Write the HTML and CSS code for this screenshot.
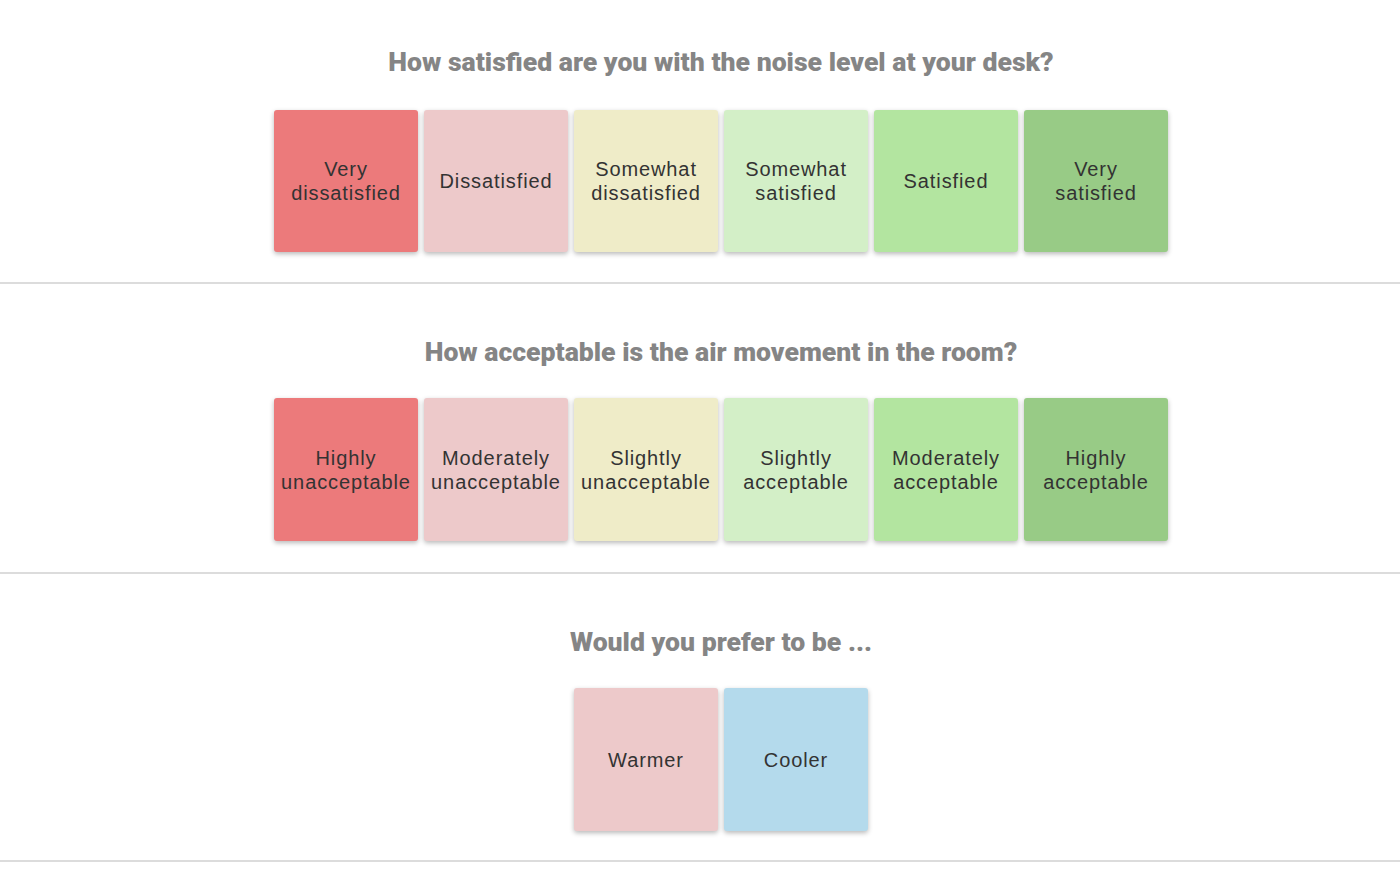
FILE: index.html
```html
<!DOCTYPE html>
<html>
<head>
<meta charset="utf-8">
<link rel="stylesheet" href="styles.css">
</head>
<body>
<main class="survey">
  <section class="question first">
    <h2 class="q-title">How satisfied are you with the noise level at your desk?</h2>
    <div class="options">
      <button class="opt c1">Very<br>dissatisfied</button>
      <button class="opt c2">Dissatisfied</button>
      <button class="opt c3">Somewhat<br>dissatisfied</button>
      <button class="opt c4">Somewhat<br>satisfied</button>
      <button class="opt c5">Satisfied</button>
      <button class="opt c6">Very<br>satisfied</button>
    </div>
  </section>
  <section class="question">
    <h2 class="q-title">How acceptable is the air movement in the room?</h2>
    <div class="options">
      <button class="opt c1">Highly<br>unacceptable</button>
      <button class="opt c2">Moderately<br>unacceptable</button>
      <button class="opt c3">Slightly<br>unacceptable</button>
      <button class="opt c4">Slightly<br>acceptable</button>
      <button class="opt c5">Moderately<br>acceptable</button>
      <button class="opt c6">Highly<br>acceptable</button>
    </div>
  </section>
  <section class="question last">
    <h2 class="q-title">Would you prefer to be ...</h2>
    <div class="options">
      <button class="opt c2">Warmer</button>
      <button class="opt cool">Cooler</button>
    </div>
  </section>
</main>
</body>
</html>
```
FILE: styles.css
```css
html, body {
  margin: 0;
  padding: 0;
  background: #ffffff;
}
.survey {
  display: flex;
  flex-direction: column;
}
.question {
  padding: 52px 0 31px 42px;
  border-bottom: 2px solid #dcdcdc;
  display: flex;
  flex-direction: column;
  align-items: center;
}
.question.first {
  padding-top: 46px;
  padding-bottom: 30px;
}
.question.last {
  padding-bottom: 29px;
}
.q-title {
  margin: 0 0 30px 0;
  font-family: Roboto, "Liberation Sans", sans-serif;
  font-weight: 900;
  font-size: 26.6px;
  line-height: 32px;
  letter-spacing: 0;
  color: #858585;
  text-align: center;
}
.question.first .q-title {
  margin-bottom: 32px;
}
.options {
  display: flex;
  gap: 6px;
}
.opt {
  width: 144px;
  height: 143px;
  border: none;
  border-radius: 3px;
  padding: 0;
  box-shadow: 0 2px 5px rgba(0, 0, 0, 0.28);
  font-family: "Liberation Sans", Arial, sans-serif;
  font-size: 20px;
  line-height: 24px;
  letter-spacing: 0.9px;
  color: #333333;
  text-align: center;
  display: flex;
  align-items: center;
  justify-content: center;
}
.question.first .opt {
  height: 142px;
}
.c1 { background: #ec7a7b; }
.c2 { background: #edc9ca; }
.c3 { background: #efecc8; }
.c4 { background: #d3efc7; }
.c5 { background: #b3e5a0; }
.c6 { background: #98cb86; }
.cool { background: #b4daec; }
```
